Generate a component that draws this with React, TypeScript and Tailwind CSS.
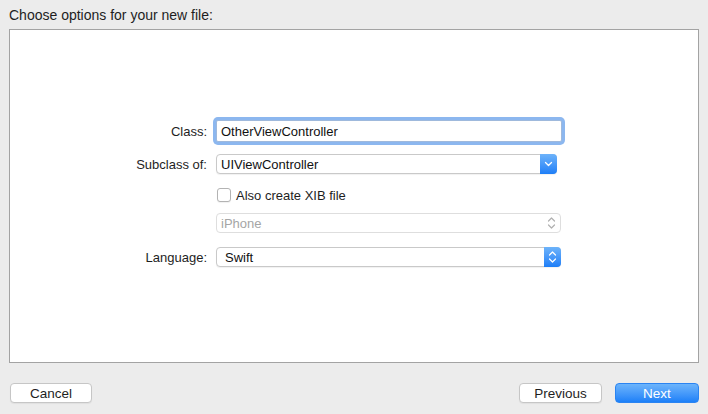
import React from 'react';

const font = { fontFamily: '"Liberation Sans", Arial, sans-serif' };

const ChevronDown: React.FC<{ className?: string }> = ({ className }) => (
    <svg width="9" height="6" viewBox="0 0 9 6" className={className}>
        <path d="M1.5 1.5 L4.5 4.5 L7.5 1.5" fill="none" stroke="currentColor" strokeWidth="1.3" strokeLinecap="round" strokeLinejoin="round" />
    </svg>
);

const UpDown: React.FC<{ className?: string }> = ({ className }) => (
    <svg width="9" height="14" viewBox="0 0 9 14" className={className}>
        <path d="M1.5 5 L4.5 2 L7.5 5" fill="none" stroke="currentColor" strokeWidth="1.2" strokeLinecap="round" strokeLinejoin="round" />
        <path d="M1.5 9 L4.5 12 L7.5 9" fill="none" stroke="currentColor" strokeWidth="1.2" strokeLinecap="round" strokeLinejoin="round" />
    </svg>
);

const Label: React.FC<{ text: string }> = ({ text }) => (
    <div className="w-[198px] pr-[1px] pt-[2px] text-right text-[13px] text-[#1e1e1e]">{text}</div>
);

export default function App() {
    return (
        <div style={font} className="w-[708px] h-[414px] bg-[#ececec] flex flex-col overflow-hidden">
            <div className="h-[29px] pl-[9px] pt-[5px] text-[14px] text-[#1e1e1e]">Choose options for your new file:</div>

            <div className="mx-[9px] h-[334px] border border-[#a3a3a3] bg-white flex flex-col pt-[90px]">
                {/* Class */}
                <div className="flex items-center h-[22px]">
                    <Label text="Class:" />
                    <div className="ml-[8px] w-[346px] h-[22px] border border-[#9fb9dc] bg-white flex items-center pl-[4px] pt-[2px] text-[13px] text-[#111] shadow-[0_0_0_3px_#8cb7ef] rounded-[2px]">
                        OtherViewController
                    </div>
                </div>

                {/* Subclass */}
                <div className="flex items-center h-[20px] mt-[12px]">
                    <Label text="Subclass of:" />
                    <div className="ml-[8px] w-[341px] h-[20px] border border-[#c9c9c9] rounded-[4px] bg-white flex items-stretch shadow-[0_1px_1px_rgba(0,0,0,0.06)]">
                        <div className="flex-1 flex items-center pl-[4px] pt-[2px] text-[13px] text-[#111]">UIViewController</div>
                        <div className="w-[17px] -my-px -mr-px rounded-r-[4px] bg-gradient-to-b from-[#6db3fa] to-[#1c7ef7] flex items-center justify-center text-white">
                            <ChevronDown />
                        </div>
                    </div>
                </div>

                {/* Checkbox */}
                <div className="flex items-center h-[20px] mt-[11px]">
                    <div className="w-[198px]" />
                    <div className="ml-[9px] flex items-center">
                        <div className="w-[14px] h-[14px] border border-[#b3b3b3] rounded-[3px] bg-white shadow-[0_1px_1px_rgba(0,0,0,0.06)]" />
                        <span className="ml-[5px] pt-[1px] text-[13px] text-[#1e1e1e]">Also create XIB file</span>
                    </div>
                </div>

                {/* iPhone (disabled) */}
                <div className="flex items-center h-[20px] mt-[8px]">
                    <div className="w-[198px]" />
                    <div className="ml-[8px] w-[345px] h-[20px] border border-[#dedede] rounded-[4px] bg-white flex items-center">
                        <div className="flex-1 pl-[4px] pt-[2px] text-[13px] text-[#a5a5a5]">iPhone</div>
                        <div className="w-[17px] flex items-center justify-center text-[#b0b0b0]">
                            <UpDown />
                        </div>
                    </div>
                </div>

                {/* Language */}
                <div className="flex items-center h-[20px] mt-[14px]">
                    <Label text="Language:" />
                    <div className="ml-[8px] w-[345px] h-[20px] border border-[#c9c9c9] rounded-[4px] bg-white flex items-stretch shadow-[0_1px_1px_rgba(0,0,0,0.06)]">
                        <div className="flex-1 flex items-center pl-[8px] pt-[2px] text-[13px] text-[#111]">Swift</div>
                        <div className="w-[17px] -my-px -mr-px rounded-r-[4px] bg-gradient-to-b from-[#6db3fa] to-[#1c7ef7] flex items-center justify-center text-white">
                            <UpDown />
                        </div>
                    </div>
                </div>
            </div>

            <div className="flex items-center px-[10px] pt-[20px]">
                <button className="w-[82px] h-[20px] rounded-[4px] border border-[#c6c6c6] bg-white text-[13.5px] text-[#1e1e1e] shadow-[0_1px_1px_rgba(0,0,0,0.05)]">Cancel</button>
                <div className="flex-1" />
                <button className="w-[83px] h-[20px] rounded-[4px] border border-[#c6c6c6] bg-white text-[13.5px] text-[#1e1e1e] shadow-[0_1px_1px_rgba(0,0,0,0.05)]">Previous</button>
                <button className="ml-[13px] mr-[-1px] w-[84px] h-[20px] rounded-[4px] border border-[#2a84f2] bg-gradient-to-b from-[#6cb4fb] to-[#1b80f8] text-[13.5px] font-medium text-white">Next</button>
            </div>
        </div>
    );
}
